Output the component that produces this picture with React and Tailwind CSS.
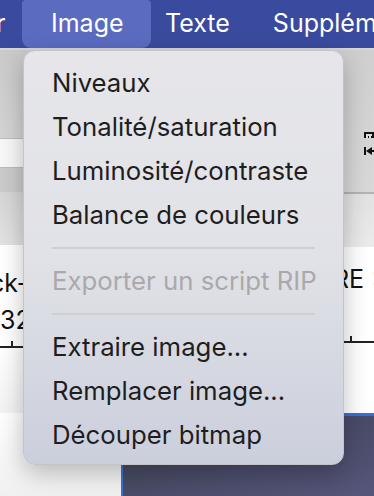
import React from "react";

const items1 = ["Niveaux", "Tonalité/saturation", "Luminosité/contraste", "Balance de couleurs"];
const items2 = ["Extraire image...", "Remplacer image...", "Découper bitmap"];

function Item({ children, disabled }) {
  return (
    <div
      className={
        "h-[44px] flex items-center pl-[28px] text-[25.75px] leading-none whitespace-nowrap " +
        (disabled ? "text-[#a9a9ab]" : "text-[#1e1e1e]")
      }
    >
      {children}
    </div>
  );
}

function Sep() {
  return (
    <div className="h-[22px] flex items-center px-[28px]">
      <div className="h-[2px] w-full bg-[#cfcfd3]" />
    </div>
  );
}

export default function App() {
  return (
    <div className="relative w-[374px] h-[496px] overflow-hidden bg-white font-['Inter','Liberation_Sans',sans-serif]">
      {/* menu bar */}
      <div className="h-[48px] bg-[#3a4a9e] flex items-stretch text-white text-[25px] leading-none">
        <div className="w-[26px] shrink-0 flex items-center -ml-[4px] pb-[2px]">
          <span>r</span>
        </div>
        <div className="w-[129px] shrink-0 rounded-b-[9px] rounded-t-[4px] bg-[#5b6bc0] flex items-center pl-[29px] pb-[2px]">
          <span>Image</span>
        </div>
        <div className="shrink-0 flex items-center pl-[14px] pb-[2px]">Texte</div>
        <div className="shrink-0 flex items-center pl-[43px] pb-[2px] whitespace-nowrap">Supplément</div>
      </div>
      <div className="h-[2px] bg-[#d6d6d6]" />

      {/* background app */}
      <div className="flex flex-col">
        <div className="flex h-[363px]">
          {/* left strip */}
          <div className="w-[40px] flex flex-col">
            <div className="h-[88px] bg-gradient-to-b from-[#cacaca] to-[#d4d4d4]" />
            <div className="h-[30px] bg-[#f8f8f8] border-y border-[#bdbdbd]" />
            <div className="h-[24px] bg-[#cbcbcb]" />
            <div className="h-[53px] bg-gradient-to-b from-[#d6d6d6] to-[#e2e2e2]" />
            <div className="flex-1 bg-white flex flex-col text-[25px] text-[#111] leading-none">
              <div className="pt-[26px] -ml-[10px] whitespace-nowrap">ck-</div>
              <div className="pt-[12px] whitespace-nowrap">32</div>
              <div className="mt-[8px] h-[7px] border-b-[2px] border-[#222] relative">
                <div className="absolute left-[11px] top-0 w-[2px] h-[7px] bg-[#222]" />
              </div>
              <div className="flex-1 bg-gradient-to-b from-white to-[#f3f3f3]" />
            </div>
          </div>
          <div className="flex-1" />
          {/* right strip */}
          <div className="w-[40px] flex flex-col">
            <div className="h-[142px] bg-gradient-to-b from-[#cfcfcf] to-[#d8d8d8] flex flex-col items-end pt-[82px] pr-0">
              <div className="w-[10px] h-[6px] border-2 border-[#111] border-b-0 bg-[#ddd] relative">
                <div className="absolute left-[2px] bottom-0 w-[1px] h-[2px] bg-[#111]" />
                <div className="absolute left-[5px] bottom-0 w-[1px] h-[2px] bg-[#111]" />
              </div>
              <div className="mt-[9px] w-[10px] flex items-center">
                <div className="w-[2px] h-[8px] bg-[#111]" />
                <div className="w-0 h-0 border-y-[4px] border-y-transparent border-r-[6px] border-r-[#111]" />
                <div className="w-[3px] h-[2px] bg-[#111]" />
              </div>
            </div>
            <div className="h-[2px] bg-[#b3b3b3]" />
            <div className="h-[53px] bg-gradient-to-b from-[#e2e2e2] to-[#ebebeb]" />
            <div className="flex-1 bg-white flex flex-col text-[25px] text-[#111] leading-none">
              <div className="pt-[20px] ml-[-1px] whitespace-nowrap">RE &gt;</div>
              <div className="mt-[44px] h-[7px] border-b-[2px] border-[#222] relative">
                <div className="absolute left-[16px] top-0 w-[2px] h-[7px] bg-[#222]" />
              </div>
              <div className="flex-1 bg-white" />
            </div>
          </div>
        </div>
        <div className="flex h-[83px]">
          <div className="w-[121px] bg-gradient-to-b from-white to-[#f0f0f0]" />
          <div className="flex-1 border-l-[2px] border-t-[3px] border-[#3a6fd8] bg-gradient-to-br from-[#3f4a48] via-[#4a4b68] to-[#55567a]" />
        </div>
      </div>

      {/* dropdown menu */}
      <div className="absolute left-[23px] top-[50px] w-[321px] h-[415px] rounded-[12px] bg-gradient-to-b from-[#e6e6ea] via-[#e1e2e7] to-[#cbcfdc] border border-[#c4c4c8] shadow-[0_8px_24px_rgba(0,0,0,0.25)] pt-[10px]">
        {items1.map((t) => (
          <Item key={t}>{t}</Item>
        ))}
        <Sep />
        <Item disabled>Exporter un script RIP</Item>
        <Sep />
        {items2.map((t) => (
          <Item key={t}>{t}</Item>
        ))}
      </div>
    </div>
  );
}
